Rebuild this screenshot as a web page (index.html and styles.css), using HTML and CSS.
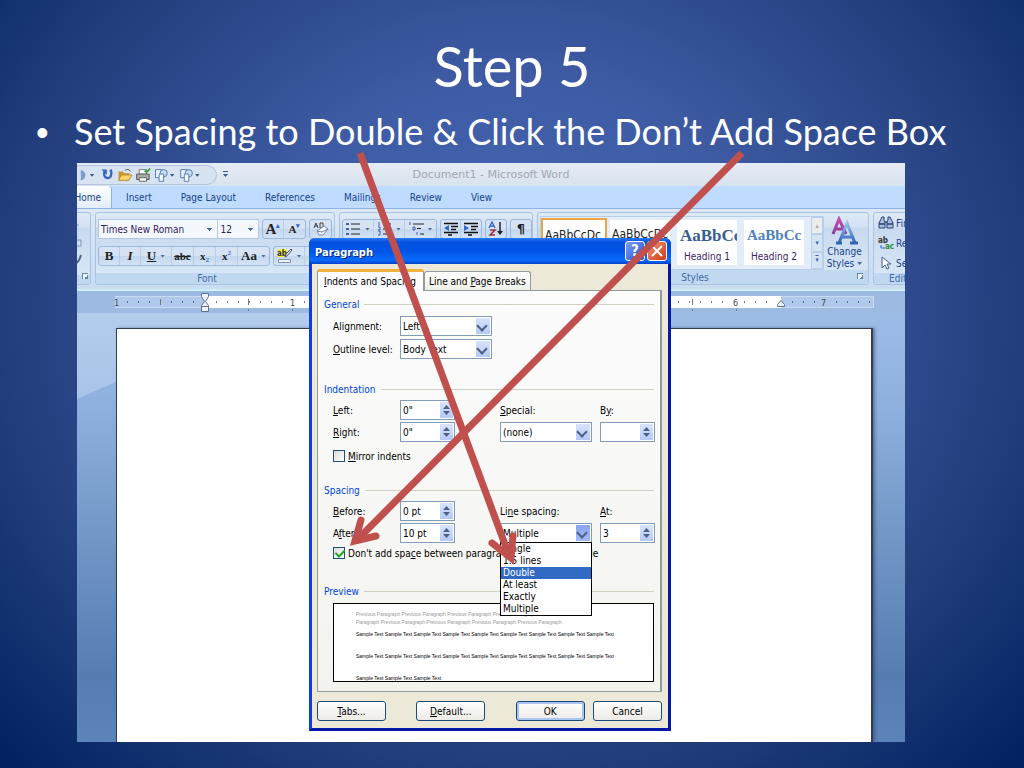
FILE: index.html
```html
<!DOCTYPE html>
<html lang="en">
<head>
    <meta charset="UTF-8">
    <meta name="viewport" content="width=device-width, initial-scale=1.0">
    <title>Step 5</title>
    <link rel="stylesheet" href="styles.css">
</head>
<body>
    <main class="slide">
        <h1>Step 5</h1>
        <ul class="bullets">
            <li>Set Spacing to Double &amp; Click the Don’t Add Space Box</li>
        </ul>

        <div class="word">
            <div class="titlebar">
                <div class="qat">
                    <svg width="140" height="20" viewBox="0 0 140 20">
                        <path d="M-3 4q6 3 5 7q-1 4-5 5" fill="#7d9bd0"/>
                        <path d="M7 9h5l-2.500 3zM96 9h5l-2.500 3zM124 9h5l-2.500 3z" fill="#3c5a8c"/>
                        <path d="M23 6v4a4 4 0 0 0 7 2q2-4 0-8" fill="none" stroke="#3566c4" stroke-width="2.500"/>
                        <path d="M20 4h6v6z" fill="#3566c4"/>
                        <path d="M39 16V6h5l1 2h6v8z" fill="#c9952c"/><path d="M39 16l3-6h12l-4 6z" fill="#fbd66f" stroke="#a87a1e" stroke-width=".8"/><path d="M46 5q4-3 6 1" fill="none" stroke="#555" stroke-width="1"/>
                        <path d="M62 4h8v5h-8z" fill="#fff" stroke="#777"/><path d="M59 9h14v6H59z" fill="#aaa" stroke="#555"/><path d="M62 13h8v4h-8z" fill="#f4f4f4" stroke="#666"/><path d="M68 5l2 2 4-4" fill="none" stroke="#3b9b3b" stroke-width="2"/>
                        <g id="shapes"><path d="M80 4h7v9h-7z" fill="#e7f0fc" stroke="#4b74b0"/><circle cx="89" cy="8" r="4" fill="#c8dcf5" stroke="#4b74b0"/><path d="M84 9h5v8h-5z" fill="#f6faff" stroke="#4b74b0"/></g>
                        <use href="#shapes" x="28"/>
                    </svg>
                    <svg class="qat-more" width="8" height="20" viewBox="0 0 8 20"><path d="M1 6.500h5" stroke="#3c5a8c"/><path d="M1 9h5l-2.500 3z" fill="#3c5a8c"/></svg>
                </div>
                <span class="doc-title">Document1 - Microsoft Word</span>
                <span></span>
            </div>

            <nav class="tabs">
                <a class="active" href="#">Home</a>
                <a href="#">Insert</a>
                <a href="#">Page Layout</a>
                <a href="#">References</a>
                <a href="#">Mailings</a>
                <a href="#">Review</a>
                <a href="#">View</a>
            </nav>

            <div class="ribbon">
                <section class="group clipboard">
                    <div class="group-body">
                        <svg width="10" height="60" viewBox="0 0 10 60"><path d="M0 12h2M0 27h4v6H0" fill="none" stroke="#7f96b8"/><path d="M4 42q-2 7-5 8" fill="none" stroke="#5a6482" stroke-width="2"/></svg>
                    </div>
                    <footer><i class="launcher"></i></footer>
                </section>

                <section class="group font">
                    <div class="group-body">
                        <div class="tools">
                            <select class="font-name" aria-label="Font"><option>Times New Roman</option></select>
                            <select class="font-size" aria-label="Font size"><option>12</option></select>
                            <div class="bar">
                                <button class="grow" aria-label="Grow font">A<sup>▴</sup></button>
                                <button class="shrink" aria-label="Shrink font">A<sup>▾</sup></button>
                            </div>
                            <div class="bar">
                                <button aria-label="Clear formatting"><svg width="18" height="16" viewBox="0 0 18 16"><path d="M2 7l2-5 2 5M3 5h3M8 2h3v5H8z" fill="none" stroke="#444"/><path d="M5 10l7-5 4 3-5 6H7z" fill="#f5f8ff" stroke="#7787a8"/><path d="M5 10l5 1 6-3" fill="none" stroke="#7787a8"/></svg></button>
                            </div>
                        </div>
                        <div class="tools">
                            <div class="bar">
                                <button><b>B</b></button>
                                <button><b><em>I</em></b></button>
                                <button class="wide"><b><u>U</u></b><i class="drop"></i></button>
                                <button class="small"><b><s>abc</s></b></button>
                                <button class="small"><b>x<sub>2</sub></b></button>
                                <button class="small"><b>x<sup>2</sup></b></button>
                                <button class="wide"><b>Aa</b><i class="drop"></i></button>
                            </div>
                            <div class="bar">
                                <button class="wide" aria-label="Highlight"><svg width="16" height="16" viewBox="0 0 16 16"><path d="M1 1h9v8H1z" fill="#f4ee4a"/><text x="0" y="8" class="ab">ab</text><path d="M15 2l-5 6-2 1 1-3 5-5z" fill="#dfe7f5" stroke="#556"/><path d="M1.500 11.500h12v3h-12z" fill="#eef2f8" stroke="#8592a8"/></svg><i class="drop"></i></button>
                                <button class="wide" aria-label="Font color"><svg width="16" height="16" viewBox="0 0 16 16"><path d="M1 11h13v4H1z" fill="#3b7a2e"/></svg></button>
                            </div>
                        </div>
                    </div>
                    <footer>Font<i class="launcher"></i></footer>
                </section>

                <section class="group para">
                    <div class="group-body">
                        <div class="tools">
                            <div class="bar">
                                <button class="list" aria-label="Bullets"><svg width="15" height="14" viewBox="0 0 15 14"><path d="M0 1h3v2H0zM0 6h3v2H0zM0 11h3v2H0z" fill="#3d5fa8"/><path d="M5 2h9M5 7h9M5 12h9" stroke="#222"/></svg><i class="drop"></i></button>
                                <button class="list" aria-label="Numbering"><svg width="15" height="14" viewBox="0 0 15 14"><path d="M2 0v4M1 5h2v3H1M1 9h2v4H1" fill="none" stroke="#3d5fa8"/><path d="M6 2h8M6 7h8M6 12h8" stroke="#222"/></svg><i class="drop"></i></button>
                                <button class="list" aria-label="Multilevel list"><svg width="15" height="14" viewBox="0 0 15 14"><path d="M1 0v3M4 5v3h2V5zM8 10v3" fill="none" stroke="#3d5fa8"/><path d="M4 2h11M8 6.500h4M11 12h4" stroke="#222"/></svg><i class="drop"></i></button>
                            </div>
                            <div class="bar">
                                <button class="indent" aria-label="Decrease indent"><svg width="16" height="14" viewBox="0 0 16 14"><path d="M1 1.500h14M8 4.500h7M8 7.500h5M1 10.500h14M5 13h4" stroke="#111" stroke-width="1.400"/><path d="M6 3v6L1 6z" fill="#3566c4"/></svg></button>
                                <button class="indent" aria-label="Increase indent"><svg width="16" height="14" viewBox="0 0 16 14"><path d="M1 1.500h14M8 4.500h7M8 7.500h5M1 10.500h14M5 13h4" stroke="#111" stroke-width="1.400"/><path d="M1 3v6l5-3z" fill="#3566c4"/></svg></button>
                            </div>
                            <div class="bar">
                                <button class="indent" aria-label="Sort"><svg width="16" height="16" viewBox="0 0 16 16"><path d="M1 7l3-6 3 6M2 5h4" fill="none" stroke="#3566c4" stroke-width="1.300"/><path d="M2 9h5l-5 5h5" fill="none" stroke="#9c3040" stroke-width="1.500"/><path d="M12 1v11" stroke="#222" stroke-width="1.500"/><path d="M9 10h6l-3 4z" fill="#222"/></svg></button>
                            </div>
                            <div class="bar"><button class="indent pilcrow"><b>¶</b></button></div>
                        </div>
                    </div>
                    <footer>Paragraph<i class="launcher"></i></footer>
                </section>

                <section class="group styles">
                    <div class="group-body">
                        <div class="gallery">
                            <button class="style selected"><span>AaBbCcDc</span>Normal</button>
                            <button class="style"><span>AaBbCcDc</span>No Spaci...</button>
                            <button class="style heading"><span class="h-one">AaBbCc</span>Heading 1</button>
                            <button class="style heading"><span class="h-two">AaBbCc</span>Heading 2</button>
                            <div class="scroller">
                                <button aria-label="Up" disabled>▴</button>
                                <button aria-label="Down">▾</button>
                                <button aria-label="More" class="more">▾</button>
                            </div>
                        </div>
                        <button class="change">
                            <svg width="30" height="30" viewBox="0 0 30 30">
                                <defs>
                                    <linearGradient id="pink" x2="0" y2="1"><stop offset="0" stop-color="#c04fb0"/><stop offset="1" stop-color="#8a3c98"/></linearGradient>
                                    <linearGradient id="blue" x2="0" y2="1"><stop offset="0" stop-color="#9cc3ef"/><stop offset="1" stop-color="#2d62b4"/></linearGradient>
                                </defs>
                                <path d="M3 18L9 3l7 15M6 13h7" fill="none" stroke="url(#pink)" stroke-width="3"/>
                                <path d="M9 27L17 7l8 20M12 21h10M6 27h6M20 27h8" fill="none" stroke="url(#blue)" stroke-width="3"/>
                            </svg>
                            Change<br>Styles<i class="drop"></i>
                        </button>
                    </div>
                    <footer>Styles<i class="launcher"></i></footer>
                </section>

                <section class="group editing">
                    <div class="group-body">
                        <button><svg width="16" height="14" viewBox="0 0 16 14"><path d="M4 1h2v3l1 2v6H1V7zM10 1h2l3 6v5H9V6l1-2z" fill="#a9bfe0" stroke="#2a4270"/><path d="M7 6h2M1 8h6M9 8h6" stroke="#2a4270" stroke-width="1.500"/></svg>Find</button>
                        <button><svg width="16" height="14" viewBox="0 0 16 14"><text x="0" y="7" class="ab">ab</text><path d="M3 9v3h4" fill="none" stroke="#3566c4"/><text x="7" y="13" class="ab ac">ac</text></svg>Replace</button>
                        <button><svg width="16" height="14" viewBox="0 0 16 14"><path d="M4 1v11l3-3 2 4 2-1-2-4h4z" fill="#fff" stroke="#445a80"/></svg>Select</button>
                    </div>
                    <footer>Editing</footer>
                </section>
            </div>

            <div class="ruler">
                <svg width="760" height="22" viewBox="0 0 760 22">
                    <path d="M.5 5.500h758v11H.5z" fill="#b0c9ea" stroke="#c8daf0"/>
                    <path d="M90 5h576v12H90z" fill="#fff"/>
                    <path d="M12 11h76" stroke="#5a6b85" stroke-width="2" stroke-dasharray="1 10"/>
                    <path d="M101 11h560" stroke="#777" stroke-width="2" stroke-dasharray="1 10"/>
                    <path d="M677 11h78" stroke="#5a6b85" stroke-width="2" stroke-dasharray="1 10"/>
                    <path d="M45.500 8v6M133.500 8v6M577.500 8v6" stroke="#777"/>
                    <path d="M133.500 18v2M177.500 18v2M577.500 18v2M621.500 18v2" stroke="#667ca0"/>
                    <path d="M174 6h9v10h-9zM617 6h9v10h-9z" fill="#fff"/>
                    <path d="M705 7h9v9h-9z" fill="#b0c9ea"/>
                    <text x="-1" y="15">1</text><text x="175" y="15">1</text><text x="618" y="15">6</text><text x="706" y="15">7</text>
                    <path d="M86.500 2.500h7v3l-3 5 3 4v6h-7v-6l3-4-3-5zM86.500 15.500h7" fill="#eef3fb" stroke="#62708c"/>
                    <path d="M662.500 15.500h7v-2l-3.500-4-3.500 4z" fill="#eef3fb" stroke="#62708c"/>
                </svg>
            </div>

            <div class="desk">
                <div class="page"></div>
            </div>

            <form class="dialog" role="dialog" aria-label="Paragraph">
                <header>
                    <strong>Paragraph</strong>
                    <button type="button" class="help">?</button>
                    <button type="button" class="close" aria-label="Close"><svg width="12" height="12" viewBox="0 0 12 12"><path d="M1 1l10 10M11 1L1 11" stroke="#fff" stroke-width="2"/></svg></button>
                </header>
                <div class="dialog-body">
                    <div class="dialog-tabs">
                        <button type="button" class="on"><u>I</u>ndents and Spacing</button>
                        <button type="button">Line and <u>P</u>age Breaks</button>
                    </div>
                    <div class="panel">
                        <h2>General</h2>
                        <div class="fields general">
                            <label for="align">Ali<u>g</u>nment:</label>
                            <span class="combo"><select id="align"><option>Left</option></select></span>
                            <label class="first" for="outline"><u>O</u>utline level:</label>
                            <span class="combo"><select id="outline"><option>Body Text</option></select></span>
                        </div>

                        <h2>Indentation</h2>
                        <div class="fields indentation">
                            <label for="left"><u>L</u>eft:</label>
                            <span class="spin"><input id="left" type="text" value='0"'><i></i></span>
                            <label for="special"><u>S</u>pecial:</label>
                            <label for="by">B<u>y</u>:</label>
                            <label for="right"><u>R</u>ight:</label>
                            <span class="spin"><input id="right" type="text" value='0"'><i></i></span>
                            <span class="combo"><select id="special"><option>(none)</option></select></span>
                            <span class="spin"><input id="by" type="text" value=""><i></i></span>
                        </div>
                        <label class="check"><input type="checkbox"><span><u>M</u>irror indents</span></label>

                        <h2 class="spacing-title">Spacing</h2>
                        <div class="fields spacing">
                            <label for="before"><u>B</u>efore:</label>
                            <span class="spin"><input id="before" type="text" value="0 pt"><i></i></span>
                            <label for="line">Li<u>n</u>e spacing:</label>
                            <label for="at"><u>A</u>t:</label>
                            <label for="after">A<u>f</u>ter:</label>
                            <span class="spin"><input id="after" type="text" value="10 pt"><i></i></span>
                            <span class="combo open">
                                <select id="line"><option>Multiple</option></select>
                                <ul class="menu" role="listbox">
                                    <li>Single</li>
                                    <li>1.5 lines</li>
                                    <li class="picked">Double</li>
                                    <li>At least</li>
                                    <li>Exactly</li>
                                    <li>Multiple</li>
                                </ul>
                            </span>
                            <span class="spin"><input id="at" type="text" value="3"><i></i></span>
                        </div>
                        <label class="check"><input type="checkbox" checked><span>Don't add spa<u>c</u>e between paragraphs of the same style</span></label>

                        <h2 class="preview-title">Preview</h2>
                        <div class="preview">
                            <p class="previous">Previous Paragraph Previous Paragraph Previous Paragraph Previous Paragraph Previous<br>Paragraph Previous Paragraph Previous Paragraph Previous Paragraph Previous Paragraph</p>
                            <p>Sample Text Sample Text Sample Text Sample Text Sample Text Sample Text Sample Text Sample Text Sample Text</p>
                            <p>Sample Text Sample Text Sample Text Sample Text Sample Text Sample Text Sample Text Sample Text Sample Text</p>
                            <p>Sample Text Sample Text Sample Text</p>
                        </div>
                    </div>
                    <div class="actions">
                        <button type="button"><u>T</u>abs...</button>
                        <button type="button"><u>D</u>efault...</button>
                        <button type="button" class="default">OK</button>
                        <button type="button">Cancel</button>
                    </div>
                </div>
            </form>
        </div>

        <svg class="arrows" width="1024" height="768" viewBox="0 0 1024 768">
            <g fill="none" stroke="#c0504d" stroke-width="7">
                <path d="M360 153L510 558"/>
                <path d="M742 153L356 541"/>
                <g stroke-linecap="round" stroke-miterlimit="8">
                    <path d="M492 543L511 558L513 536"/>
                    <path d="M361 520L355 541L376 536"/>
                </g>
            </g>
        </svg>
    </main>
</body>
</html>
```
FILE: styles.css
```css
:root {
    --navy: #002060;
    --ink: #15428b;
    --blue: #0046d5;
    --field: #7f9db9;
    --ui: "DejaVu Sans Condensed", "DejaVu Sans", sans-serif;
}

* {
    margin: 0;
    padding: 0;
    box-sizing: border-box;
}

body {
    font-family: Lato, sans-serif;
    color: #fff;
}

button, select, input {
    font: inherit;
    color: inherit;
    border: 0;
    background: none;
    border-radius: 0;
}

select {
    appearance: none;
}

.slide {
    position: relative;
    display: flex;
    flex-direction: column;
    min-height: 100vh;
    padding-bottom: 26px;
    overflow: hidden;
    background: radial-gradient(ellipse farthest-corner at 50% 40%, #4a6bb8 0%, #3e5ba4 35%, #233e7c 70%, var(--navy) 100%);
}

h1 {
    padding-top: 32px;
    font-size: 56px;
    line-height: 68px;
    font-weight: 400;
    text-align: center;
}

.bullets {
    margin: 8px 0;
    padding-left: 74px;
    font-size: 36px;
    line-height: 47px;
    list-style: none;
    white-space: nowrap;
}

.bullets li::before {
    content: "•";
    display: inline-block;
    width: 38px;
    margin-left: -38px;
    font-family: "Liberation Sans", sans-serif;
    line-height: 36px;
}

/* Word window */
.word {
    position: relative;
    flex: 1;
    display: flex;
    flex-direction: column;
    margin: 0 119px 0 77px;
    font-family: var(--ui);
    font-size: 10px;
    color: var(--ink);
    background: #bfdbff;
}

.titlebar {
    display: grid;
    grid-template-columns: 1fr auto 1fr;
    align-items: center;
    height: 23px;
    background: linear-gradient(#e4ebf4, #d9e3ee);
}

.qat {
    display: flex;
    align-items: center;
}

.qat svg:first-child {
    border: 1px solid #b4c6dc;
    border-left: 0;
    border-radius: 0 10px 10px 0;
    background: #d7e3f1;
}

.qat-more {
    margin-left: 5px;
}

.doc-title {
    font-family: "DejaVu Sans", sans-serif;
    font-size: 11px;
    color: #a2a7b0;
}

.tabs {
    display: flex;
    height: 22px;
    overflow: hidden;
}

.tabs a {
    padding: 0 15px 0 14px;
    line-height: 24px;
    color: var(--ink);
    text-decoration: none;
}

.tabs .active {
    display: flex;
    justify-content: flex-end;
    width: 35px;
    padding: 0 10px 0 0;
    overflow: hidden;
    background: linear-gradient(#fff, #e3edf9);
    border-right: 1px solid #8fb4e3;
    border-radius: 0 4px 0 0;
}

.ribbon {
    display: flex;
    gap: 4px;
    height: 83px;
    padding: 3px 0 4px;
    overflow: hidden;
    background: linear-gradient(#dde8f5, #c9dcf1);
    border-top: 1px solid #8db2e3;
    border-bottom: 2px solid #cdf1fb;
}

.group {
    display: flex;
    flex-direction: column;
    flex: none;
    border: 1px solid #a9c3e4;
    border-radius: 3px;
    background: linear-gradient(#dfe9f5 0%, #d3e1f2 20%, #c8daef 21%, #dbe9f8 100%);
    overflow: hidden;
}

.group-body {
    flex: 1;
    padding: 6px 2px 0;
}

.group footer {
    display: flex;
    justify-content: center;
    align-items: center;
    height: 16px;
    padding-right: 16px;
    position: relative;
    color: #3e6aaa;
    background: #c1d8f1;
}

.launcher {
    position: absolute;
    right: 5px;
    bottom: 5px;
    width: 6px;
    height: 6px;
    border-top: 1px solid #6684ad;
    border-left: 1px solid #6684ad;
    background: linear-gradient(135deg, #eef4fc 60%, #6684ad 60%);
}

.clipboard {
    width: 14px;
    border-left: 0;
    border-radius: 0 3px 3px 0;
}

.clipboard .group-body {
    padding: 0;
}

.font {
    width: 240px;
}

.para {
    width: 194px;
}

.styles {
    width: 332px;
}

.editing {
    width: 90px;
}

.tools {
    display: flex;
    gap: 3px;
    height: 20px;
    margin-bottom: 7px;
}

.font-name, .font-size {
    height: 20px;
    padding-left: 2px;
    border: 1px solid #b1c8e6;
    color: #35205c;
    background: linear-gradient(#4c6a9c, #4c6a9c) right 5px top 8px / 5px 1px no-repeat,
        linear-gradient(#4c6a9c, #4c6a9c) right 6px top 9px / 3px 1px no-repeat,
        linear-gradient(#4c6a9c, #4c6a9c) right 7px top 10px / 1px 1px no-repeat, #f4f8fd;
}

.font-name {
    width: 125px;
}

.font-size {
    width: 43px;
    margin-left: -4px;
}

.bar {
    display: flex;
    height: 20px;
    border: 1px solid #9bb7dc;
    border-radius: 3px;
    background: linear-gradient(#d5e3f4 50%, #c3d6ed 50%, #d3e3f5);
}

.bar button {
    display: flex;
    align-items: center;
    justify-content: center;
    width: 21px;
    font-family: "Liberation Serif", serif;
    font-size: 13px;
    line-height: 16px;
    color: #222;
    border-right: 1px solid #b9cde7;
}

.bar button:last-child {
    border-right: 0;
}

.bar .wide {
    width: 31px;
}

.bar .small {
    width: 22px;
    font-size: 11px;
}

.bar .list {
    width: 31px;
}

.bar .indent {
    width: 20px;
}

.bar .grow {
    font-size: 15px;
    font-weight: bold;
}

.bar .shrink {
    font-size: 11px;
    font-weight: bold;
}

.bar sup, .bar sub {
    font-size: 7px;
    line-height: 0;
    color: #3566c4;
}

.bar sup {
    align-self: flex-start;
    padding-top: 6px;
    vertical-align: 5px;
}

.bar sub {
    vertical-align: -2px;
}

.bar .pilcrow {
    font-family: "DejaVu Sans", sans-serif;
}

.drop {
    width: 5px;
    height: 3px;
    margin-left: 4px;
    background: #4c6a9c;
    clip-path: polygon(0 0, 100% 0, 50% 100%);
}

.ab {
    font: bold 8px "DejaVu Sans Condensed", sans-serif;
    fill: #333;
}

.ac {
    fill: #2d8a3a;
}

.styles .group-body {
    display: flex;
    justify-content: space-between;
    padding: 3px 3px 0 2px;
}

.gallery {
    display: flex;
    gap: 7px;
    height: 54px;
    border: 1px solid #b9cfe9;
    background: #e3edf9;
}

.style {
    width: 60px;
    height: 45px;
    margin-top: 3px;
    overflow: hidden;
    color: #3c1c66;
    background: #fff;
    white-space: nowrap;
}

.style.selected {
    width: 66px;
    height: 51px;
    margin: 1px -4px 0 0;
    border: 2px solid #eda544;
}

.style span {
    display: block;
    padding: 0 0 5px 2px;
    font-size: 12px;
    line-height: 23px;
    text-align: left;
    color: #222;
}

.heading span {
    padding: 0 0 4px 3px;
    font-family: "Liberation Serif", serif;
    font-weight: bold;
    font-size: 17px;
}

.style .h-one {
    color: #365f91;
}

.style .h-two {
    font-size: 15px;
    color: #4f81bd;
}

.scroller {
    display: flex;
    flex-direction: column;
    width: 12px;
}

.scroller button {
    flex: 1;
    border: 1px solid #b9cfe9;
    font-size: 7px;
    line-height: 12px;
    color: #3566a8;
    background: #d5e4f5;
}

.scroller button:disabled {
    color: #a7a7a7;
    background: #ececec;
}

.scroller .more {
    text-decoration: overline;
}

.change {
    width: 42px;
    line-height: 12px;
}

.change svg {
    display: block;
    margin: 0 auto;
}

.change .drop {
    display: inline-block;
    margin: 0 0 2px 3px;
}

.editing .group-body {
    display: flex;
    flex-direction: column;
    padding: 0 0 0 4px;
}

.editing button {
    display: flex;
    align-items: center;
    gap: 2px;
    height: 20px;
}

.editing footer {
    justify-content: flex-start;
    padding-left: 15px;
}

.ruler {
    height: 22px;
    padding-left: 38px;
    background: #9dbbe2;
}

.ruler svg {
    display: block;
}

.ruler text {
    font-size: 9px;
    fill: #444;
}

.desk {
    position: relative;
    flex: 1;
    display: flex;
    padding: 15px 32px 0 39px;
    background: linear-gradient(#9dbce6 0%, #8fb0de 22%, #7399c8 50%, #557db2 85%, #5c84bb 100%);
}

/* light sweep in the top left corner */
.desk::before {
    content: "";
    position: absolute;
    top: 0;
    left: 0;
    width: 300px;
    height: 86px;
    background: linear-gradient(#b4cdec, #a8c4e8);
    clip-path: polygon(0 0, 100% 0, 13% 80%, 0 100%);
}

.page {
    position: relative;
    flex: 1;
    background: #fff;
    border: 1px solid #333d4d;
    border-width: 1px 2px 0 1px;
    box-shadow: 2px 0 3px rgba(40, 60, 100, 0.5);
}

/* Paragraph dialog */
.dialog {
    position: absolute;
    top: 75px;
    left: 232px;
    width: 362px;
    border: 3px solid #0a3ee0;
    border-top: 0;
    border-right-color: #0418a8;
    border-bottom-color: #0418a8;
    border-radius: 6px 6px 0 0;
    color: #000;
    background: #ece9d8;
}

.dialog header {
    display: flex;
    align-items: center;
    gap: 2px;
    height: 26px;
    margin: 0 -3px;
    padding: 0 4px 0 6px;
    border-radius: 6px 6px 0 0;
    background: linear-gradient(#2a7bf5 0%, #0352e0 15%, #0053e6 50%, #0a6bfc 85%, #0340c8 100%);
}

.dialog strong {
    flex: 1;
    padding-top: 2px;
    font-size: 11px;
    color: #fff;
    text-shadow: 1px 1px #0a2a80;
}

.help, .close {
    display: flex;
    align-items: center;
    justify-content: center;
    width: 20px;
    height: 20px;
    border: 1px solid #fff;
    border-radius: 3px;
    font-size: 15px;
    font-weight: bold;
    color: #fff;
    background: linear-gradient(135deg, #7c9ef5, #2350d8);
}

.close {
    background: linear-gradient(135deg, #f0967c, #d03a12);
}

.dialog-body {
    padding: 5px 6px 7px 5px;
}

.dialog-tabs {
    display: flex;
    align-items: flex-end;
}

.dialog-tabs button {
    height: 19px;
    padding: 0 4px;
    border: 1px solid #919b9c;
    border-bottom: 0;
    border-radius: 3px 3px 0 0;
    background: linear-gradient(#fff, #f0f0ea);
}

.dialog-tabs .on {
    z-index: 1;
    height: 22px;
    margin-bottom: -1px;
    padding: 0 7px 0 6px;
    border-top: 3px solid #f2b03c;
    background: #fcfcfe;
}

.panel {
    height: 402px;
    padding: 7px 6px 0 6px;
    border: 1px solid #919b9c;
    border-right-width: 2px;
    background: linear-gradient(#fcfcfd, #f3f3ee);
}

.panel h2 {
    display: flex;
    align-items: center;
    gap: 5px;
    height: 12px;
    font-size: 10px;
    font-weight: 400;
    color: var(--blue);
}

.panel h2::after {
    content: "";
    flex: 1;
    height: 1px;
    background: #cfcfc2;
}

.fields {
    display: grid;
    grid-template-columns: 67px 100px 100px 55px;
    align-items: center;
    padding-left: 9px;
}

.fields .first {
    grid-column: 1;
}

.general {
    row-gap: 3px;
    margin: 6px 0 24px;
}

.indentation, .spacing {
    row-gap: 2px;
    margin-top: 5px;
}

.spin, .combo {
    position: relative;
    display: flex;
    width: 92px;
    height: 20px;
    border: 1px solid var(--field);
    background: #fff;
}

.spin {
    width: 55px;
}

.spin input, .combo select {
    width: 100%;
    padding: 0 2px;
}

.combo::after {
    content: "";
    position: absolute;
    top: 1px;
    right: 1px;
    width: 14px;
    height: 16px;
    background: linear-gradient(#d8e4fd, #b5c9f5);
    pointer-events: none;
}

.combo::before {
    content: "";
    position: absolute;
    z-index: 1;
    top: 5px;
    right: 5px;
    width: 6px;
    height: 6px;
    border: solid #4d6185;
    border-width: 0 2px 2px 0;
    transform: rotate(45deg);
    pointer-events: none;
}

.open::after {
    background: linear-gradient(#8aa5ee, #a3baf5);
}

.spin i {
    flex: none;
    display: flex;
    flex-direction: column;
    justify-content: space-between;
    align-items: center;
    width: 13px;
    margin: 1px;
    padding: 3px 0;
    background: linear-gradient(#d8e4fd, #b5c9f5);
}

.spin i::before, .spin i::after {
    content: "";
    width: 7px;
    height: 4px;
    background: #4d6185;
    clip-path: polygon(50% 0, 100% 100%, 0 100%);
}

.spin i::after {
    clip-path: polygon(0 0, 100% 0, 50% 100%);
}

.menu {
    position: absolute;
    z-index: 2;
    top: 18px;
    left: 0;
    width: 92px;
    margin-left: -1px;
    border: 1px solid #000;
    list-style: none;
    line-height: 12px;
    background: #fff;
}

.menu li {
    padding-left: 2px;
}

.menu .picked {
    color: #fff;
    background: #316ac5;
}

.check {
    display: flex;
    align-items: center;
    gap: 3px;
    height: 12px;
    margin: 8px 0 0 9px;
    white-space: nowrap;
}

.spacing + .check {
    margin-top: 4px;
}

.check input {
    appearance: none;
    width: 12px;
    height: 12px;
    border: 1px solid #1c5180;
    background: linear-gradient(135deg, #dcdcd7, #fff);
}

.check input:checked::before {
    content: "";
    display: block;
    width: 4px;
    height: 7px;
    margin: 0 3px;
    border: solid #21a121;
    border-width: 0 2px 2px 0;
    transform: rotate(45deg);
}

.panel .spacing-title {
    margin-top: 22px;
}

.panel .preview-title {
    margin-top: 26px;
}

.preview {
    height: 79px;
    margin: 6px 0 0 9px;
    padding: 6px 22px 0;
    overflow: hidden;
    border: 1px solid #000;
    font: 5px/22px "Liberation Sans", sans-serif;
    white-space: nowrap;
    background: #fff;
}

.preview .previous {
    line-height: 8px;
    margin-bottom: -3px;
    color: #999;
}

.actions {
    display: flex;
    justify-content: space-between;
    margin-top: 9px;
}

.actions button {
    width: 69px;
    height: 20px;
    border: 1px solid #1c4a78;
    border-radius: 3px;
    background: linear-gradient(#fff, #ecebe6);
}

.actions .default {
    margin-left: 22px;
    box-shadow: inset 0 0 0 2px #a9c4f0;
}

.actions button:nth-child(2) {
    margin-left: 22px;
}

/* callouts drawn over the slide */
.arrows {
    position: absolute;
    z-index: 5;
    top: 0;
    left: 0;
    pointer-events: none;
}
```
